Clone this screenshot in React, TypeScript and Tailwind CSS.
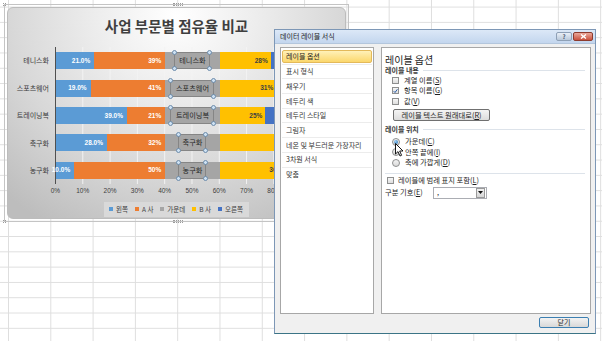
import React from "react";

const rows = [
  { name: "테니스화", left: 21, a: 39, b: 28, box: 36, showB: true },
  { name: "스포츠웨어", left: 19, a: 41, b: 31, box: 44, showB: true },
  { name: "트레이닝복", left: 39, a: 21, b: 25, box: 44, showB: true },
  { name: "축구화", left: 28, a: 32, b: 45, box: 28, showB: false },
  { name: "농구화", left: 10, a: 50, b: 36, box: 28, showB: true },
];

const TOTAL = 150;
const pct = (v: number) => `${(v / TOTAL) * 100}%`;

const menu = [
  "레이블 옵션",
  "표시 형식",
  "채우기",
  "테두리 색",
  "테두리 스타일",
  "그림자",
  "네온 및 부드러운 가장자리",
  "3차원 서식",
  "맞춤",
];

function Handle({ pos }: { pos: string }) {
  return (
    <span
      className={`absolute w-[5px] h-[5px] rounded-full border border-[#6d8cab] bg-[#cfe2f3] ${pos}`}
    />
  );
}

function Checkbox({ checked }: { checked?: boolean }) {
  return (
    <span className="w-[7px] h-[7px] border border-[#8e8f8f] bg-[linear-gradient(to_bottom,#f6f6f6,#dedede)] flex items-center justify-center shrink-0">
      {checked && (
        <svg width="6" height="6" viewBox="0 0 6 6">
          <path d="M0.8 3.2 L2.4 4.8 L5.3 0.9" fill="none" stroke="#2b5da6" strokeWidth="1.2" />
        </svg>
      )}
    </span>
  );
}

function Radio({ on }: { on?: boolean }) {
  return (
    <span className="w-[8px] h-[8px] rounded-full border border-[#8e8f8f] bg-[linear-gradient(to_bottom,#f4f4f4,#d9d9d9)] flex items-center justify-center shrink-0">
      {on && <span className="w-[4px] h-[4px] rounded-full bg-[radial-gradient(circle_at_35%_35%,#9fd0f5,#1f6db4)]" />}
    </span>
  );
}

function Chart() {
  return (
    <div className="absolute left-[4px] top-[4px] w-[345px] h-[218px] border border-[#c4c4c4]">
      <span className="absolute left-[168px] -top-[2px] w-[10px] h-[3px] border-y border-dotted border-[#9a9a9a]" />
      <span className="absolute left-[168px] -bottom-[2px] w-[10px] h-[3px] border-y border-dotted border-[#9a9a9a]" />
      <span className="absolute -left-[2px] -top-[2px] w-[3px] h-[3px] border border-dotted border-[#9a9a9a]" />
      <span className="absolute -left-[2px] -bottom-[2px] w-[3px] h-[3px] border border-dotted border-[#9a9a9a]" />
      <div className="absolute inset-[2px] rounded-[6px] border border-[#bcbcbc] overflow-hidden bg-[radial-gradient(ellipse_75%_115%_at_50%_4%,#ffffff_0%,#eeeeee_30%,#d8d8d8_65%,#bdbdbd_100%)] flex flex-col font-['Noto_Sans_CJK_KR',sans-serif]">
        <div className="mt-[9px] h-[18px] leading-[18px] text-center text-[14.5px] font-bold text-[#3f3f3f]">
          사업 부문별 점유율 비교
        </div>
        <div className="mt-[12px] flex">
          <div className="w-[47px] flex flex-col">
            {rows.map((r) => (
              <div
                key={r.name}
                className="h-[27.4px] flex items-center justify-end pr-[6px] text-[7px] text-[#3a3a3a] whitespace-nowrap"
              >
                {r.name}
              </div>
            ))}
          </div>
          <div className="w-[274px] border-l border-[#505050] flex flex-col bg-[linear-gradient(to_right,#f3f3f3_1px,transparent_1px)] bg-[size:27.3px_100%] bg-[position:-1px_0]">
            {rows.map((r) => {
              const right = TOTAL - (r.left + r.a + 30 + r.b);
              return (
                <div key={r.name} className="h-[27.4px] flex items-center">
                  <div className="w-full h-[17px] flex font-['Liberation_Sans',sans-serif] text-[6.5px] font-bold whitespace-nowrap">
                    <div
                      className="bg-[#5b9bd5] flex items-center justify-end pr-[4px] text-white"
                      style={{ width: pct(r.left) }}
                    >
                      {r.left}.0%
                    </div>
                    <div
                      className="bg-[#ed7d31] flex items-center justify-end pr-[4px] text-white"
                      style={{ width: pct(r.a) }}
                    >
                      {r.a}%
                    </div>
                    <div className="bg-[#a5a5a5] flex items-center justify-center" style={{ width: pct(30) }}>
                      <div
                        className="relative h-[17px] border border-[#858585] flex items-center justify-center font-['Noto_Sans_CJK_KR',sans-serif] font-normal text-[7.2px] text-[#262626]"
                        style={{ width: r.box }}
                      >
                        {r.name}
                        <Handle pos="-left-[3px] -top-[3px]" />
                        <Handle pos="-right-[3px] -top-[3px]" />
                        <Handle pos="-left-[3px] -bottom-[3px]" />
                        <Handle pos="-right-[3px] -bottom-[3px]" />
                      </div>
                    </div>
                    <div
                      className="bg-[#ffc000] flex items-center justify-end pr-[3px] text-[#404040]"
                      style={{ width: pct(r.b) }}
                    >
                      {r.showB ? `${r.b}%` : ""}
                    </div>
                    <div className="bg-[#4472c4]" style={{ width: pct(right) }} />
                  </div>
                </div>
              );
            })}
          </div>
        </div>
        <div className="mt-[3px] ml-[33.8px] flex font-['Liberation_Sans',sans-serif] text-[6.5px] leading-[8px] text-[#404040]">
          {[0, 10, 20, 30, 40, 50, 60, 70, 80].map((v) => (
            <div key={v} className="w-[27.3px] shrink-0 text-center">
              {v}%
            </div>
          ))}
        </div>
        <div className="mt-[7px] mx-auto w-[145px] h-[15px] bg-[#d9d9d9] flex items-center pl-[5px] gap-[7px] text-[6.5px] text-[#404040]">
          {[
            ["왼쪽", "bg-[#5b9bd5]"],
            ["A 사", "bg-[#ed7d31]"],
            ["가운데", "bg-[#a5a5a5]"],
            ["B 사", "bg-[#ffc000]"],
            ["오른쪽", "bg-[#4472c4]"],
          ].map(([t, c]) => (
            <div key={t} className="flex items-center gap-[3px] whitespace-nowrap">
              <span className={`w-[4px] h-[4px] ${c}`} />
              {t}
            </div>
          ))}
        </div>
      </div>
    </div>
  );
}

function Dialog() {
  return (
    <div className="absolute left-[274px] top-[29px] w-[322px] h-[305px] border border-[#7d97b6] border-b-[#3b7486] bg-[#f0f0f0] flex flex-col font-['Noto_Sans_CJK_KR',sans-serif] text-[#1e1e1e]">
      <div className="h-[14px] shrink-0 flex items-center pl-[5px] pr-[2px] bg-[linear-gradient(to_bottom,#dce8f7,#c3d6ee)] border-b border-[#b3c6dc]">
        <span className="text-[7px]">데이터 레이블 서식</span>
        <div className="ml-auto flex gap-[1px]">
          <div className="w-[16px] h-[9px] rounded-[2px] border border-[#8ea0b6] bg-[linear-gradient(to_bottom,#e9eff7,#b9c8da)] flex items-center justify-center text-[6px] font-bold text-[#4a5a6e] leading-none">
            ?
          </div>
          <div className="w-[20px] h-[9px] rounded-[2px] border border-[#8d3b2e] bg-[linear-gradient(to_bottom,#eba89b,#c9513d)] flex items-center justify-center">
            <svg width="7" height="5" viewBox="0 0 7 5">
              <path d="M1 0.5 L6 4.5 M6 0.5 L1 4.5" stroke="#ffffff" strokeWidth="1.4" />
            </svg>
          </div>
        </div>
      </div>
      <div className="flex-1 flex flex-col pt-[3px] pl-[5px] pr-[4px] pb-[5px]">
        <div className="flex gap-[7px] h-[267px]">
          <div className="w-[94px] h-full border border-[#a7a7a7] bg-white pt-[1px]">
            {menu.map((m, i) =>
              i === 0 ? (
                <div key={m} className="h-[14.7px] p-[1px]">
                  <div className="h-full rounded-[2px] border border-[#e3b95a] bg-[linear-gradient(to_bottom,#fff1b8,#fbd76c)] flex items-center pl-[3px] text-[7px]">
                    {m}
                  </div>
                </div>
              ) : (
                <div
                  key={m}
                  className="h-[14.7px] mx-[1px] flex items-center pl-[4px] text-[7px] text-[#333] border-t border-[#ececec] whitespace-nowrap"
                >
                  {m}
                </div>
              )
            )}
          </div>
          <div className="w-[210px] h-full border border-[#a7a7a7] bg-white pt-[4px] flex flex-col text-[7.3px]">
            <div className="h-[14px] flex items-center pl-[3px] text-[10px]">레이블 옵션</div>
            <div className="h-[9px] flex items-center pl-[3px] pr-[5px] gap-[4px]">
              <span className="text-[7px] font-bold text-[#3a3a3a]">레이블 내용</span>
              <span className="flex-1 h-px bg-[#dde3ea]" />
            </div>
            {[
              ["계열 이름(", "S", ")", false],
              ["항목 이름(", "G", ")", true],
              ["값(", "V", ")", false],
            ].map(([a, k, b, c]) => (
              <div key={String(k)} className="h-[10.5px] flex items-center pl-[10px] gap-[5px]">
                <Checkbox checked={Boolean(c)} />
                <span>
                  {a}
                  <span className="underline">{k}</span>
                  {b}
                </span>
              </div>
            ))}
            <div className="mt-[2.5px] ml-[11px] w-[97px] h-[12px] rounded-[2px] border border-[#707070] bg-[linear-gradient(to_bottom,#f4f4f4,#dcdcdc)] flex items-center justify-center">
              레이블 텍스트 원래대로(<span className="underline">R</span>)
            </div>
            <div className="mt-[3px] h-[10px] flex items-center pl-[3px] pr-[5px] gap-[4px]">
              <span className="text-[7px] font-bold text-[#3a3a3a]">레이블 위치</span>
              <span className="flex-1 h-px bg-[#dde3ea]" />
            </div>
            <div className="mt-[2.7px]">
              {[
                ["가운데(", "C", ")", true],
                ["안쪽 끝에(", "I", ")", false],
                ["축에 가깝게(", "D", ")", false],
              ].map(([a, k, b, on]) => (
                <div key={String(k)} className="h-[10.5px] flex items-center pl-[10px] gap-[5px]">
                  <Radio on={Boolean(on)} />
                  <span>
                    {a}
                    <span className="underline">{k}</span>
                    {b}
                  </span>
                </div>
              ))}
            </div>
            <div className="mt-[4.5px] mx-[3px] mr-[5px] h-px bg-[#dde3ea]" />
            <div className="mt-[1.5px] h-[10px] flex items-center pl-[5px] gap-[4px]">
              <Checkbox />
              <span>
                레이블에 범례 표지 포함(<span className="underline">L</span>)
              </span>
            </div>
            <div className="mt-[1px] h-[13px] flex items-center pl-[3px]">
              <span className="w-[48px]">
                구분 기호(<span className="underline">E</span>)
              </span>
              <div className="w-[54px] h-[12px] border border-[#abadb3] bg-white flex items-center">
                <span className="pl-[3px] flex-1 leading-none">,</span>
                <div className="w-[9px] h-[10px] mr-px border border-[#9a9a9a] bg-[linear-gradient(to_bottom,#f2f2f2,#d6d6d6)] flex items-center justify-center">
                  <svg width="5" height="3" viewBox="0 0 5 3">
                    <path d="M0 0 H5 L2.5 3 Z" fill="#111" />
                  </svg>
                </div>
              </div>
            </div>
          </div>
        </div>
        <div className="mt-[3px] self-end mr-[2px] w-[50px] h-[11px] rounded-[2px] border border-[#3c7fb1] bg-[linear-gradient(to_bottom,#f3f3f3,#d8d8d8)] flex items-center justify-center text-[7px]">
          닫기
        </div>
      </div>
    </div>
  );
}

export default function App() {
  return (
    <div className="relative w-[602px] h-[341px] overflow-hidden bg-white bg-[linear-gradient(to_right,#dedede_1px,transparent_1px),linear-gradient(to_bottom,#dedede_1px,transparent_1px)] bg-[size:42.3px_15.3px] bg-[position:8px_6.6px]">
      <Chart />
      <Dialog />
      <svg className="absolute left-[395px] top-[143px]" width="9" height="14" viewBox="0 0 9 14">
        <path d="M0.5 0.5 L0.5 11 L3 8.6 L5 13 L6.6 12.3 L4.7 8 L8 8 Z" fill="#ffffff" stroke="#000000" strokeWidth="0.9" />
      </svg>
    </div>
  );
}
